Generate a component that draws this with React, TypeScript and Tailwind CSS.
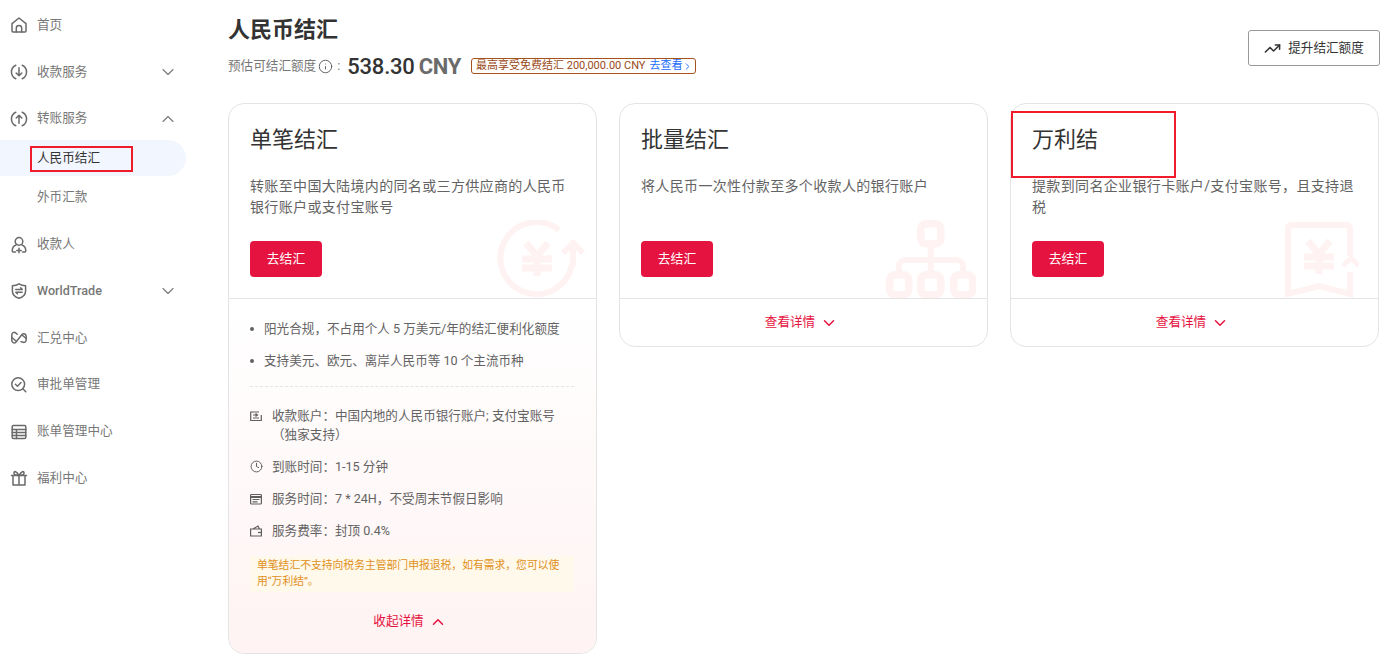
import type { ReactNode } from "react";
import { ChevronDown, ChevronUp, Clock, Info, TrendingUp } from "lucide-react";

const font = "font-['Roboto','Noto_Sans_CJK_SC',sans-serif]";

function NavSvg({ children }: { children: ReactNode }) {
  return (
    <svg viewBox="0 0 18 18" fill="none" stroke="#6a6a6a" strokeWidth="1.5" strokeLinecap="round" strokeLinejoin="round" className="h-[18px] w-[18px] shrink-0">
      {children}
    </svg>
  );
}

const icons = {
  home: (
    <NavSvg>
      <path d="M2 7.600 9 2l7 5.600V15a1 1 0 0 1-1 1H3a1 1 0 0 1-1-1Z" />
      <path d="M6.300 16v-3.800a2.700 2.700 0 0 1 5.400 0V16" />
    </NavSvg>
  ),
  down: (
    <NavSvg>
      <path d="M5.800 2.200a7.500 7.500 0 0 0 0 13.600M12.200 2.200a7.500 7.500 0 0 1 0 13.600" />
      <path d="M9 4.800v8M6.200 10l2.800 2.800L11.800 10" />
    </NavSvg>
  ),
  up: (
    <NavSvg>
      <path d="M5.800 2.200a7.500 7.500 0 0 0 0 13.600M12.200 2.200a7.500 7.500 0 0 1 0 13.600" />
      <path d="M9 13.200v-8M6.200 8 9 5.200 11.800 8" />
    </NavSvg>
  ),
  payee: (
    <NavSvg>
      <circle cx="9" cy="5.400" r="3.800" />
      <path d="M6 9C3.700 9.800 2.300 12 2.200 14.800c0 .8.500 1.200 1.100 1.200h2.200M12 9c2.300.8 3.700 3 3.800 5.800 0 .8-.5 1.200-1.100 1.200h-2.200" />
      <path d="M9 12.300v4.500M6.800 14.500h4.400" />
    </NavSvg>
  ),
  shield: (
    <NavSvg>
      <path d="M9 1.800c2 1.200 4.400 1.800 6.600 1.900v5.200c0 3.400-2.600 6-6.600 7.400-4-1.400-6.600-4-6.600-7.400V3.700C4.600 3.600 7 3 9 1.800Z" />
      <path d="M5.800 7.400h6.400l-1.600-1.600M12.200 10.200H5.800l1.600 1.600" />
    </NavSvg>
  ),
  exchange: (
    <NavSvg>
      <path d="M7.200 5.300 5.600 3.900C3.900 2.600 1.800 3.800 1.800 6v5.200c0 2.300 2.300 3.500 4 2.100l6.400-8c1.700-1.400 4-.2 4 2.100v3.400c0 2.200-2.100 3.300-3.700 2.100L11 12.700" />
      <path d="M1.800 8.500 6 12M12 6l4.200 3.500" />
    </NavSvg>
  ),
  audit: (
    <NavSvg>
      <circle cx="8.200" cy="8.200" r="6.400" />
      <path d="M5.400 8.200 7.500 10.300 11 6.500M12.800 12.800l3 3" />
    </NavSvg>
  ),
  bill: (
    <NavSvg>
      <rect x="2.200" y="2.500" width="13.600" height="13" rx="1.200" />
      <path d="M2.200 6.500h13.600M2.200 9.500h13.600M2.200 12.500h13.600M6.500 6.500v9" />
    </NavSvg>
  ),
  gift: (
    <NavSvg>
      <path d="M1.500 6.500h15M3 6.500V16h12V6.500M9 6.500V16" />
      <path d="M9 6.500C7 2.300 3.600 1.400 4 4.400c.2 1.400 2 2.100 5 2.100s4.800-.7 5-2.100c.4-3-3-2.100-5 2.100Z" />
    </NavSvg>
  ),
};

type NavItem = { label: string; icon: ReactNode; caret?: string; bold?: boolean };

const navTop: NavItem[] = [
  { label: "首页", icon: icons.home },
  { label: "收款服务", icon: icons.down, caret: "down" },
  { label: "转账服务", icon: icons.up, caret: "up" },
];

const navBottom: NavItem[] = [
  { label: "收款人", icon: icons.payee },
  { label: "WorldTrade", icon: icons.shield, caret: "down", bold: true },
  { label: "汇兑中心", icon: icons.exchange },
  { label: "审批单管理", icon: icons.audit },
  { label: "账单管理中心", icon: icons.bill },
  { label: "福利中心", icon: icons.gift },
];

function NavRow({ item }: { item: NavItem }) {
  return (
    <div className="flex h-[46.7px] items-center pl-[10px] pr-[8.500px]">
      {item.icon}
      <span className={`ml-[9px] flex-1 text-[12.600px] text-[#777777] ${item.bold ? "font-medium" : ""}`}>{item.label}</span>
      {item.caret === "down" && <ChevronDown size={20} color="#777777" strokeWidth={1.300} />}
      {item.caret === "up" && <ChevronUp size={20} color="#777777" strokeWidth={1.300} />}
    </div>
  );
}

function Sidebar() {
  return (
    <aside className="w-[186px] shrink-0 pt-[2px]">
      {navTop.map((item) => (
        <NavRow key={item.label} item={item} />
      ))}
      <div className="-mt-[2px] flex h-[36px] items-center rounded-r-[18px] bg-[#f2f6ff] pl-[37px] pt-[1px] text-[12.600px] text-[#333333]">人民币结汇</div>
      <div className="flex h-[42px] items-center pl-[37px] text-[12.600px] text-[#777777]">外币汇款</div>
      <div className="mt-[3.400px]">
        {navBottom.map((item) => (
          <NavRow key={item.label} item={item} />
        ))}
      </div>
    </aside>
  );
}

const markColor = "#fff2f2";

function YenMark() {
  return (
    <g stroke={markColor} strokeWidth="7" fill="none">
      <path d="M-11-15 0-2 11-15M-15 1H15M-15 10H15M0-2V18" />
    </g>
  );
}

function WatermarkTransfer() {
  return (
    <svg viewBox="0 0 90 78" className="absolute left-[268px] top-[116px] h-[78px] w-[90px]" fill="none">
      <path d="M62 10A36 36 0 1 0 75 44" stroke={markColor} strokeWidth="6" />
      <path d="M76 24V46M66 33 76 23 86 33" stroke={markColor} strokeWidth="6" />
      <g transform="translate(40 38)">
        <YenMark />
      </g>
    </svg>
  );
}

function WatermarkBatch() {
  return (
    <svg viewBox="0 0 90 78" className="absolute left-[266px] top-[116px] h-[78px] w-[90px]" fill="none" stroke={markColor} strokeWidth="7.500">
      <rect x="34.750" y="3.750" width="20" height="20" rx="5" />
      <rect x="3.750" y="54.750" width="19" height="20" rx="5" />
      <rect x="34.750" y="54.750" width="20" height="20" rx="5" />
      <rect x="67.750" y="54.750" width="19" height="20" rx="5" />
      <path strokeWidth="6" d="M44.750 24v30M13 54v-8a6 6 0 0 1 6-6h52a6 6 0 0 1 6 6v8" />
    </svg>
  );
}

function WatermarkRefund() {
  return (
    <svg viewBox="0 0 74 76" className="absolute left-[274px] top-[118px] h-[76px] w-[74px]" fill="none">
      <path d="M65 34V6a3 3 0 0 0-3-3H6a3 3 0 0 0-3 3v66l31-8 31 8V50" stroke={markColor} strokeWidth="6" />
      <path d="M58 44 66 36 74 44" stroke={markColor} strokeWidth="5" />
      <g transform="translate(34 34)">
        <YenMark />
      </g>
    </svg>
  );
}

function CardHead({ title, desc, mark }: { title: string; desc: ReactNode; mark: ReactNode }) {
  return (
    <div className="relative h-[195px] overflow-hidden border-b border-[#e4e4e4] px-[21px] pt-[20px]">
      {mark}
      <h2 className="relative text-[22px] leading-[32px] font-normal text-[#333333]">{title}</h2>
      <p className="relative mt-[20px] h-[42px] text-[14px] leading-[21px] tracking-[0.35px] text-[#636363]">{desc}</p>
      <button className="relative mt-[23px] h-[36px] w-[72px] rounded-[4px] bg-[#e5133f] text-[12.800px] text-white">去结汇</button>
    </div>
  );
}

function DetailLink({ label, open }: { label: string; open?: boolean }) {
  return (
    <div className="flex h-[47px] items-center justify-center gap-[5px] pr-[4px] text-[12.600px] text-[#e5133f]">
      {label}
      {open ? <ChevronUp size={18} strokeWidth={2} /> : <ChevronDown size={18} strokeWidth={2} />}
    </div>
  );
}

function MiniIcon({ children }: { children: ReactNode }) {
  return (
    <svg viewBox="0 0 12 12" fill="none" stroke="#5f5f5f" strokeWidth="1.200" className="mr-[10px] mt-[4px] h-[12px] w-[12px] shrink-0">
      {children}
    </svg>
  );
}

const detailRows = [
  {
    text: "到账时间：1-15 分钟",
    icon: <Clock size={13} color="#5f5f5f" strokeWidth={1.800} className="mr-[9px] mt-[3px] shrink-0" />,
  },
  {
    text: "服务时间：7 * 24H，不受周末节假日影响",
    icon: (
      <MiniIcon>
        <rect x=".6" y="1.500" width="10.800" height="9.500" rx=".8" />
        <path d="M.6 4h10.800" strokeWidth="2" />
        <path d="M2.500 6.500h7M2.500 8.800h5" />
      </MiniIcon>
    ),
  },
  {
    text: "服务费率：封顶 0.4%",
    icon: (
      <MiniIcon>
        <path d="M.6 4h10.800v7H.6zM3 4l5-3 1.500 3" />
        <path d="M8 7.500h3.400" />
      </MiniIcon>
    ),
  },
];

function SingleDetails() {
  return (
    <div className="h-[354px] rounded-b-[16px] bg-gradient-to-b from-white to-[#fff3f3] pl-[21px] pr-[22px] pt-[20px] text-[12.600px] text-[#636363]">
      <ul className="space-y-[12px] leading-[20px]">
        <li className="flex items-center">
          <span className="mr-[10px] h-[4px] w-[4px] rounded-full bg-[#636363]" />阳光合规，不占用个人 5 万美元/年的结汇便利化额度
        </li>
        <li className="flex items-center">
          <span className="mr-[10px] h-[4px] w-[4px] rounded-full bg-[#636363]" />支持美元、欧元、离岸人民币等 10 个主流币种
        </li>
      </ul>
      <div className="mt-[15px] border-t border-dashed border-[#e4e4e4]" />
      <div className="mt-[19px] flex leading-[19px]">
        <MiniIcon>
          <path d="M9 2H.7v8.500h10.600V5" />
          <path d="M3 5h4.500M5.500 3.500 7.500 5 5.500 6.500M3 8h6" />
        </MiniIcon>
        <span>
          收款账户：中国内地的人民币银行账户; 支付宝账号
          <br />（独家支持）
        </span>
      </div>
      {detailRows.map((row) => (
        <div key={row.text} className="mt-[13px] flex leading-[19px]">
          {row.icon}
          <span>{row.text}</span>
        </div>
      ))}
      <p className="mt-[16px] bg-[#fff9ec] px-[7px] pt-[2px] pb-[2px] text-[10.800px] leading-[16px] text-[#e0901a]">
        单笔结汇不支持向税务主管部门申报退税，如有需求，您可以使用“万利结”。
      </p>
      <div className="mt-[6px]">
        <DetailLink label="收起详情" open />
      </div>
    </div>
  );
}

export default function App() {
  return (
    <div className={`${font} relative flex h-[668px] w-[1399px] overflow-hidden bg-white`}>
      <Sidebar />
      <main className="min-w-0 flex-1 pl-[42px] pr-[20px]">
        <div className="flex h-[103px] items-start justify-between">
          <div>
            <h1 className="mt-[13px] text-[22px] leading-[34px] font-bold text-[#333333]">人民币结汇</h1>
            <div className="mt-[2px] flex h-[34px] items-center text-[12.600px] text-[#777777]">
              预估可结汇额度
              <Info size={15} color="#666666" strokeWidth={1.600} className="ml-[2px]" />
              <span className="ml-[4px]">:</span>
              <span className="ml-[7px] text-[22px] font-medium tracking-[-0.2px] text-[#333333]">538.30</span>
              <span className="ml-[4px] text-[22px] font-bold tracking-[-0.3px] text-[#6b6b6b]">CNY</span>
              <span className="ml-[10px] flex h-[16px] items-center rounded-[3px] border border-[#a5521c] pl-[4px] pr-[2px] text-[11px] text-[#9a4a17]">
                最高享受免费结汇 200,000.00 CNY
                <span className="ml-[4px] text-[#1a6cff]">去查看</span>
                <ChevronDown size={11} color="#1a6cff" strokeWidth={2} className="-rotate-90" />
              </span>
            </div>
          </div>
          <button className="-mr-[1px] mt-[30px] flex h-[36px] w-[132px] items-center justify-center gap-[7px] rounded-[3px] border border-[#999999] text-[12.600px] text-[#333333]">
            <TrendingUp size={17} strokeWidth={2.200} />
            提升结汇额度
          </button>
        </div>
        <div className="grid grid-cols-3 items-start gap-[22px]">
          <section className="rounded-[16px] border border-[#e4e4e4]">
            <CardHead title="单笔结汇" desc="转账至中国大陆境内的同名或三方供应商的人民币银行账户或支付宝账号" mark={<WatermarkTransfer />} />
            <SingleDetails />
          </section>
          <section className="rounded-[16px] border border-[#e4e4e4]">
            <CardHead title="批量结汇" desc="将人民币一次性付款至多个收款人的银行账户" mark={<WatermarkBatch />} />
            <DetailLink label="查看详情" />
          </section>
          <section className="rounded-[16px] border border-[#e4e4e4]">
            <CardHead title="万利结" desc="提款到同名企业银行卡账户/支付宝账号，且支持退税" mark={<WatermarkRefund />} />
            <DetailLink label="查看详情" />
          </section>
        </div>
      </main>
      <div className="absolute left-[30px] top-[146px] h-[26px] w-[103px] border-2 border-[#f01c2c]" />
      <div className="absolute left-[1011px] top-[111px] h-[67px] w-[165px] border-2 border-[#f01c2c]" />
    </div>
  );
}
